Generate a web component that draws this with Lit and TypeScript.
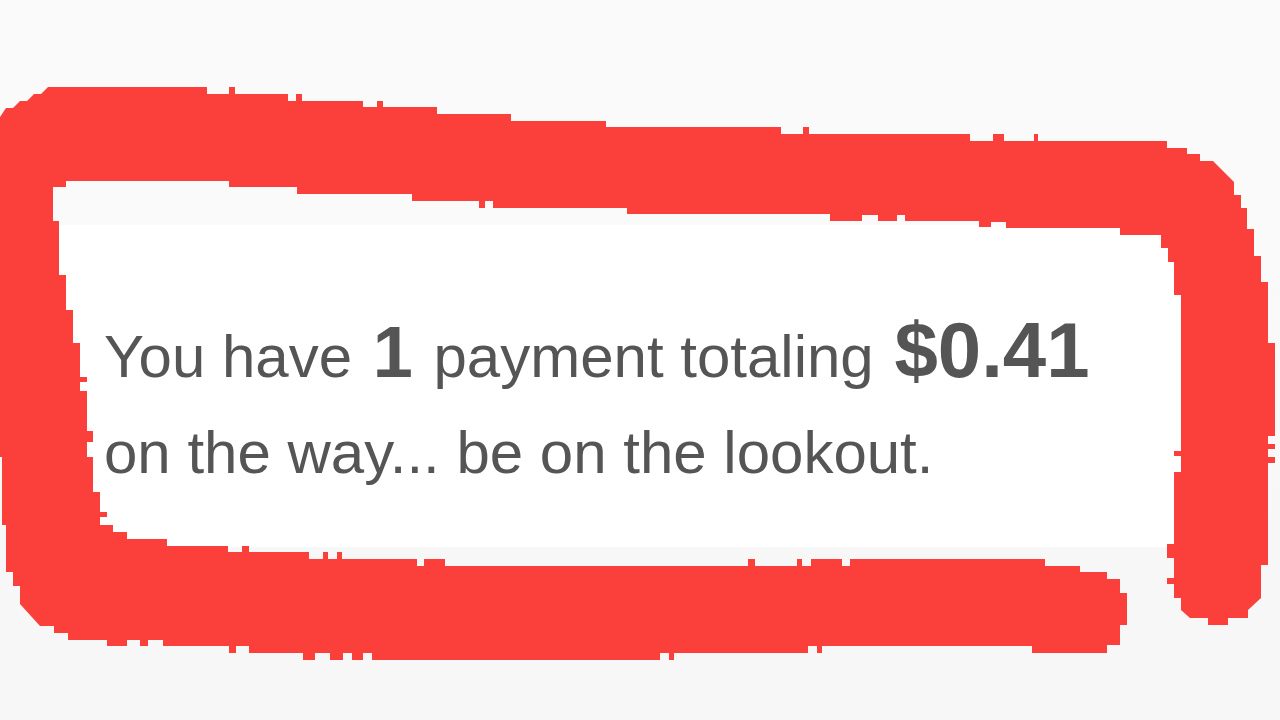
import { LitElement, html, css } from "lit";
import { customElement, property } from "lit/decorators.js";

/** Hand-drawn marker loop that lies over the notice. */
@customElement("marker-loop")
class MarkerLoop extends LitElement {
  static styles = css`
    :host {
      position: absolute;
      inset: 0;
      pointer-events: none;
    }
    .loop {
      display: block;
      width: 100%;
      height: auto;
      fill: #fb403b;
    }
  `;

  render() {
    return html`
      <svg class="loop" viewBox="0 0 1280 720" aria-hidden="true">
        <path
          d="M0 117L6 108H13L20 101H27L34 94H41L48 87H207V94H229V87H235V94H288V101H296V94H302V101H363V107H377V101H383V107H437V114H511V121H606V127H781V134H803V127H809V134H970V141H993V134H1004V141H1034V134H1038V141H1167V148H1187V154H1200V161H1213L1234 182V195H1241V208H1247V229H1254V256H1261V282H1268V343H1275V436H1268V444H1275V449H1268V457H1275V463H1268V565H1261V598L1248 610V618H1228V625H1208V618H1190L1181 610V598H1174V584H1167V578H1174V558H1167V544H1174V472H1181V456H1174V451H1181V295H1174V262H1168V248H1161V235H1120V228H1006V222H991V227H979V221H905V215H897V221H878V215H862V221H830V214H627V208H493V201H485V208H479V201H412V194H297V187H229V181H66V187H53V221H59V275H66V310H73V343H80V377H87V382H80V391H87V431H93V442H87V457H93V492H100V512H107V517H100V525H113V532H127V539H167V546H228V552H242V546H249V552H309V559H323V552H328V559H337V552H342V559H417V566H424V559H445V566H748V559H755V566H797V559H802V566H811V559H842V566H850V559H1045V566H1080V572H1107V579H1120V593H1127V625H1120V645H1107V653H1032V646H822V653H817V646H808V653H674V660H669V653H660V660H372V653H363V660H352V653H343V660H330V653H315V660H303V653H249V646H236V653H229V646H163V640H148V646H140V640H127V646H107V640H68V633H54V626H40L20 604V586H13V572H6V525H2V457H0Z"
        ></path>
      </svg>
    `;
  }
}

@customElement("app-root")
class AppRoot extends LitElement {
  static styles = css`
    :host {
      display: grid;
      grid-template-rows: 225px auto 1fr;
      position: relative;
      min-height: 100vh;
      overflow: hidden;
      background: linear-gradient(#fafafb 225px, #f7f7f7 547px);
      font-family: "Liberation Sans", Arial, Helvetica, sans-serif;
      color: #555555;
    }
    .notice {
      grid-row: 2;
      margin: 0 56px;
      padding: 84px 48px 46px;
      background: #ffffff;
    }
    .message {
      margin: 0;
      font-size: 60px;
      line-height: 96px;
    }
    .count,
    .amount {
      margin: 0 4px;
      font-weight: 700;
      line-height: 1;
    }
    .count {
      font-size: 72px;
    }
    .amount {
      font-size: 78px;
    }
  `;

  @property({ type: Number }) count = 1;
  @property() total = "$0.41";

  render() {
    return html`
      <main class="notice">
        <p class="message">
          You have <strong class="count">${this.count}</strong> payment totaling
          <strong class="amount">${this.total}</strong><br />
          on the way... be on the lookout.
        </p>
      </main>
      <marker-loop></marker-loop>
    `;
  }
}
